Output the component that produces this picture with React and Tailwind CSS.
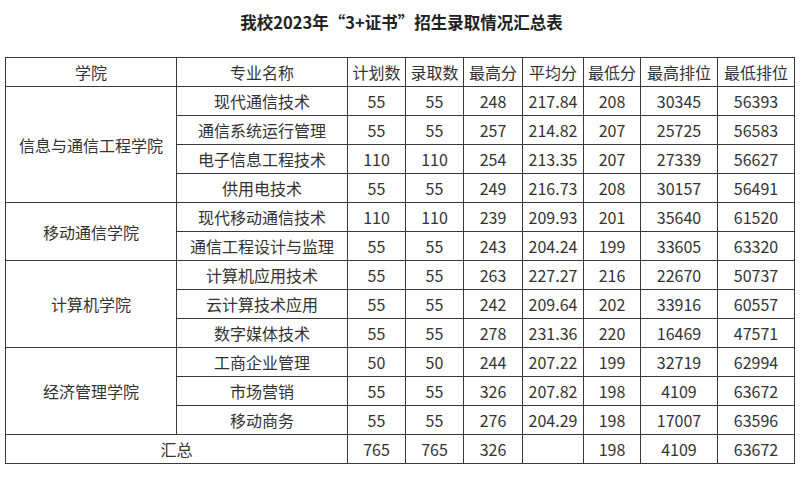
import React from 'react'

const rows = [
  { college: '信息与通信工程学院', span: 4, major: '现代通信技术', plan: 55, admit: 55, max: 248, avg: '217.84', min: 208, rankHi: 30345, rankLo: 56393 },
  { major: '通信系统运行管理', plan: 55, admit: 55, max: 257, avg: '214.82', min: 207, rankHi: 25725, rankLo: 56583 },
  { major: '电子信息工程技术', plan: 110, admit: 110, max: 254, avg: '213.35', min: 207, rankHi: 27339, rankLo: 56627 },
  { major: '供用电技术', plan: 55, admit: 55, max: 249, avg: '216.73', min: 208, rankHi: 30157, rankLo: 56491 },
  { college: '移动通信学院', span: 2, major: '现代移动通信技术', plan: 110, admit: 110, max: 239, avg: '209.93', min: 201, rankHi: 35640, rankLo: 61520 },
  { major: '通信工程设计与监理', plan: 55, admit: 55, max: 243, avg: '204.24', min: 199, rankHi: 33605, rankLo: 63320 },
  { college: '计算机学院', span: 3, major: '计算机应用技术', plan: 55, admit: 55, max: 263, avg: '227.27', min: 216, rankHi: 22670, rankLo: 50737 },
  { major: '云计算技术应用', plan: 55, admit: 55, max: 242, avg: '209.64', min: 202, rankHi: 33916, rankLo: 60557 },
  { major: '数字媒体技术', plan: 55, admit: 55, max: 278, avg: '231.36', min: 220, rankHi: 16469, rankLo: 47571 },
  { college: '经济管理学院', span: 3, major: '工商企业管理', plan: 50, admit: 50, max: 244, avg: '207.22', min: 199, rankHi: 32719, rankLo: 62994 },
  { major: '市场营销', plan: 55, admit: 55, max: 326, avg: '207.82', min: 198, rankHi: 4109, rankLo: 63672 },
  { major: '移动商务', plan: 55, admit: 55, max: 276, avg: '204.29', min: 198, rankHi: 17007, rankLo: 63596 },
]

const headers = ['学院', '专业名称', '计划数', '录取数', '最高分', '平均分', '最低分', '最高排位', '最低排位']
const widths = [171, 171, 58, 58, 59, 61, 57, 77, 77]

const cell = 'border border-[#3a3a3a] p-0 text-center align-middle whitespace-nowrap'

export default function App() {
  return (
    <div
      className="w-[803px] h-[477px] bg-white text-[#333]"
      style={{ fontFamily: '"Noto Sans CJK SC", "Noto Sans", sans-serif' }}
    >
      <h1 className="pt-[11px] h-[57px] text-center text-[16.5px] font-bold text-[#222] leading-[22px]">
        我校2023年“3+证书”招生录取情况汇总表
      </h1>
      <table className="ml-[5px] w-[789px] table-fixed border-collapse text-[16px] leading-[20px]">
        <colgroup>
          {widths.map((w, i) => (
            <col key={i} style={{ width: w }} />
          ))}
        </colgroup>
        <thead>
          <tr className="h-[29px]">
            {headers.map((h) => (
              <th key={h} className={`${cell} font-normal`}>{h}</th>
            ))}
          </tr>
        </thead>
        <tbody>
          {rows.map((r) => (
            <tr key={r.major} className="h-[29px]">
              {r.college && (
                <td rowSpan={r.span} className={cell}>{r.college}</td>
              )}
              <td className={cell}>{r.major}</td>
              <td className={cell}>{r.plan}</td>
              <td className={cell}>{r.admit}</td>
              <td className={cell}>{r.max}</td>
              <td className={cell}>{r.avg}</td>
              <td className={cell}>{r.min}</td>
              <td className={cell}>{r.rankHi}</td>
              <td className={cell}>{r.rankLo}</td>
            </tr>
          ))}
          <tr className="h-[29px]">
            <td colSpan={2} className={cell}>汇总</td>
            <td className={cell}>765</td>
            <td className={cell}>765</td>
            <td className={cell}>326</td>
            <td className={cell}></td>
            <td className={cell}>198</td>
            <td className={cell}>4109</td>
            <td className={cell}>63672</td>
          </tr>
        </tbody>
      </table>
    </div>
  )
}
